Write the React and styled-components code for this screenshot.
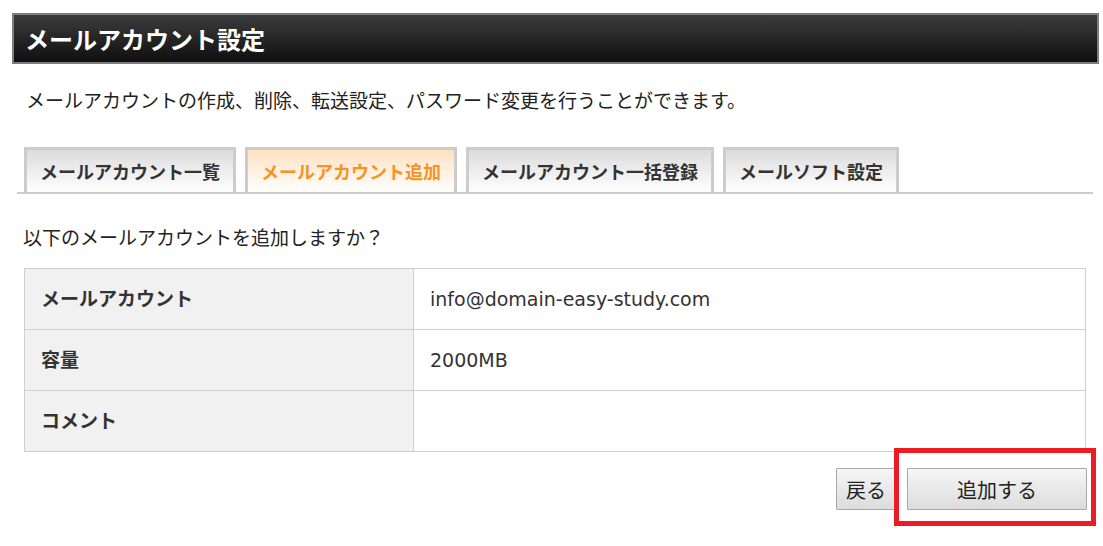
import React from 'react'
import styled, { createGlobalStyle } from 'styled-components'

const GlobalStyle = createGlobalStyle`
  html, body {
    margin: 0;
    padding: 0;
    background: #fff;
  }
  body {
    font-family: "Noto Sans CJK JP", "Noto Sans", sans-serif;
    color: #222;
  }
`

const Page = styled.div`
  width: 1103px;
  height: 546px;
  box-sizing: border-box;
  padding: 13px 4px 0 12px;
  overflow: hidden;
`

const Header = styled.h1`
  margin: 0;
  height: 47px;
  display: flex;
  align-items: center;
  padding-left: 11px;
  border: 2px solid #7e7e7e;
  background: linear-gradient(#3c3c3c, #0f0f0f);
  color: #fff;
  font-size: 24px;
  font-weight: 700;
`

const Lead = styled.p`
  margin: 22px 0 0 14px;
  font-size: 19px;
  line-height: 28px;
  color: #222;
`

const TabBar = styled.div`
  display: flex;
  gap: 9px;
  margin: 33px 6px 0 5px;
  padding-left: 7px;
  border-bottom: 2px solid #cccccc;
`

const Tab = styled.div`
  height: 42px;
  padding: 0 13px;
  display: flex;
  align-items: center;
  border: 3px solid #cccccc;
  border-bottom: none;
  background: ${p => (p.active ? 'linear-gradient(#ffe1c2, #ffffff)' : 'linear-gradient(#dcdcdc, #ffffff)')};
  color: ${p => (p.active ? '#f7931e' : '#333')};
  font-size: 18px;
  font-weight: 700;
  white-space: nowrap;
`

const Question = styled.p`
  margin: 29px 0 0 11px;
  font-size: 19px;
  line-height: 28px;
  color: #222;
`

const Table = styled.table`
  margin: 17px 0 0 12px;
  width: 1062px;
  border-collapse: collapse;
  font-size: 19px;
`

const Row = styled.tr`
  height: 61px;
`

const Label = styled.th`
  width: 372px;
  padding: 0 0 4px 16px;
  text-align: left;
  background: #f1f1f1;
  border: 1px solid #cfcfcf;
  color: #333;
  font-weight: 700;
`

const Value = styled.td`
  padding: 0 0 0 16px;
  border: 1px solid #cfcfcf;
  color: #333;
  font-family: "DejaVu Sans", "Noto Sans CJK JP", sans-serif;
`

const Actions = styled.div`
  display: flex;
  justify-content: flex-end;
  gap: 11px;
  margin: 16px 12px 0 0;
`

const Button = styled.button`
  height: 42px;
  width: ${p => p.w}px;
  padding: 0;
  border: 1px solid #a8a8a8;
  border-radius: 1px;
  background: linear-gradient(#f6f6f6, #dcdcdc);
  color: #222;
  font-family: "Noto Sans CJK JP", sans-serif;
  font-size: 20px;
  cursor: pointer;
`

const Marked = styled.span`
  position: relative;
  display: inline-flex;
`

const Highlight = styled.span`
  position: absolute;
  top: -20px;
  left: -13px;
  right: -9px;
  bottom: -16px;
  border: 5px solid #ec1c24;
  pointer-events: none;
`

const tabs = ['メールアカウント一覧', 'メールアカウント追加', 'メールアカウント一括登録', 'メールソフト設定']

const rows = [
  ['メールアカウント', 'info@domain-easy-study.com'],
  ['容量', '2000MB'],
  ['コメント', ''],
]

export default function App() {
  return (
    <Page>
      <GlobalStyle />
      <Header>メールアカウント設定</Header>
      <Lead>メールアカウントの作成、削除、転送設定、パスワード変更を行うことができます。</Lead>
      <TabBar>
        {tabs.map((t, i) => (
          <Tab key={t} active={i === 1}>{t}</Tab>
        ))}
      </TabBar>
      <Question>以下のメールアカウントを追加しますか？</Question>
      <Table>
        <tbody>
          {rows.map(([k, v]) => (
            <Row key={k}>
              <Label>{k}</Label>
              <Value>{v}</Value>
            </Row>
          ))}
        </tbody>
      </Table>
      <Actions>
        <Button w={60}>戻る</Button>
        <Marked>
          <Button w={180}>追加する</Button>
          <Highlight />
        </Marked>
      </Actions>
    </Page>
  )
}
